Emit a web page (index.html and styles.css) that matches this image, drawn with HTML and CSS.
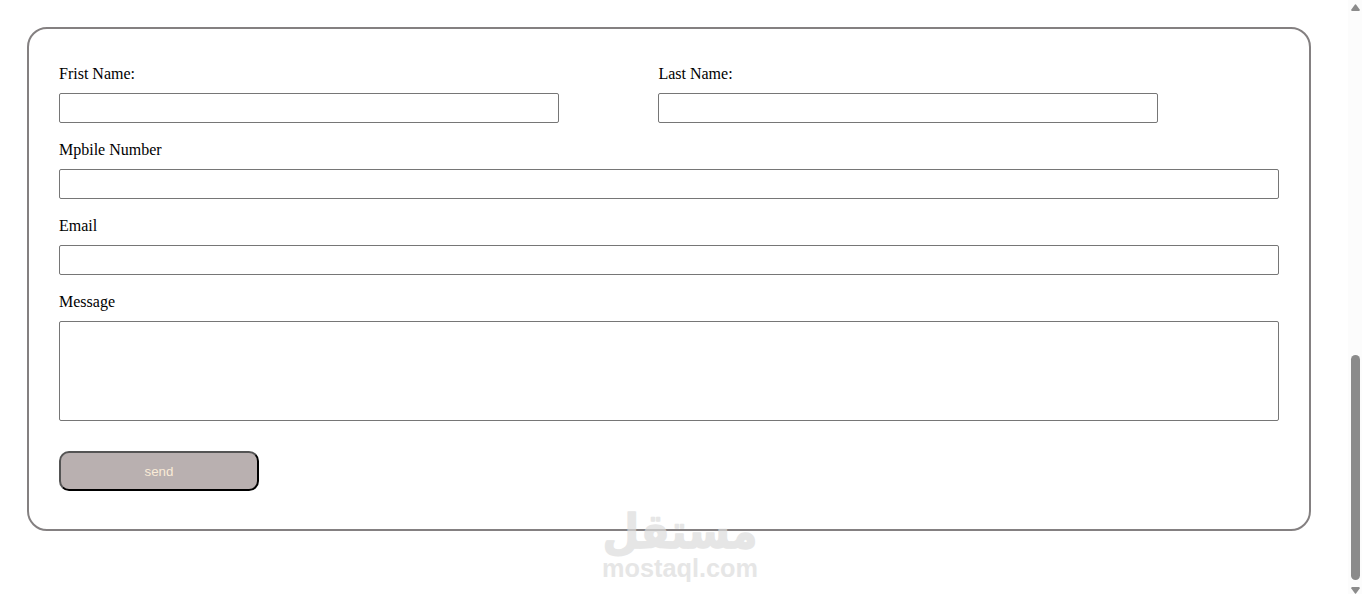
FILE: index.html
```html
<!DOCTYPE html>
<html lang="en">

<head>
    <meta charset="utf-8">
    <meta name="viewport" content="width=device-width, initial-scale=1">
    <title>Contact</title>
    <link rel="stylesheet" href="styles.css">
</head>

<body>
    <main>
        <form class="contact">
            <div class="names">
                <div class="field">
                    <label for="fname">Frist Name:</label>
                    <input type="text" id="fname">
                </div>
                <div class="field">
                    <label for="lname">Last Name:</label>
                    <input type="text" id="lname">
                </div>
            </div>
            <div class="field">
                <label for="mobile">Mpbile Number</label>
                <input type="text" id="mobile">
            </div>
            <div class="field">
                <label for="email">Email</label>
                <input type="email" id="email">
            </div>
            <div class="field">
                <label for="message">Message</label>
                <textarea id="message"></textarea>
            </div>
            <button type="button" class="send">send</button>
        </form>
    </main>

    <div class="scrollbar">
        <svg width="9" height="7" viewBox="0 0 9 7"><path d="M4 .5Q4.500 0 5 .5L8.700 5.500Q9 7 8 7H1Q0 7 .3 5.500Z"/></svg>
        <div class="thumb"></div>
        <svg width="9" height="7" viewBox="0 0 9 7"><path d="M4 6.500Q4.500 7 5 6.500L8.700 1.500Q9 0 8 0H1Q0 0 .3 1.500Z"/></svg>
    </div>

    <svg class="watermark" width="180" height="100" viewBox="-10 -14 180 100">
        <text class="arabic" x="80" y="40" text-anchor="middle" textLength="155" lengthAdjust="spacingAndGlyphs">مستقل</text>
        <text class="latin" x="2" y="69" textLength="156" lengthAdjust="spacingAndGlyphs">mostaql.com</text>
    </svg>
</body>

</html>
```
FILE: styles.css
```css
body {
    margin: 0;
    display: flex;
    height: 594px;
    overflow: hidden;
    position: relative;
    background-color: #fff;
    font-family: "Liberation Serif", "Times New Roman", serif;
    font-size: 16px;
}

main {
    flex: 1;
    padding: 27px 37px 0 27px;
}

.contact {
    box-sizing: border-box;
    height: 504px;
    padding: 36px 30px 30px;
    border: 2px solid #848081;
    border-radius: 20px;
}

.names {
    display: flex;
    gap: 99.4px;
}

.names .field {
    width: 500px;
}

.field {
    margin-bottom: 18px;
}

label {
    display: block;
    line-height: 18px;
    margin-bottom: 10px;
}

input,
textarea {
    display: block;
    box-sizing: border-box;
    width: 100%;
    height: 30px;
    border: 1px solid #767676;
    border-radius: 2px;
    background-color: #fff;
}

textarea {
    height: 100px;
    resize: none;
}

.send {
    display: block;
    width: 200px;
    height: 40px;
    margin-top: 30px;
    padding: 0;
    border: 2px outset #000;
    border-radius: 10px;
    background-color: #b9b0b0;
    color: antiquewhite;
    font-family: "Liberation Sans", Arial, sans-serif;
    font-size: 13.333px;
}

.scrollbar {
    box-sizing: border-box;
    width: 14px;
    padding: 4px 2px 0 3px;
    background-color: #fcfcfc;
}

.scrollbar svg {
    display: block;
    fill: #8b8b8b;
}

.thumb {
    width: 9px;
    height: 225px;
    margin: 344px 0 7px;
    border-radius: 5px;
    background-color: #8b8b8b;
}

.watermark {
    position: absolute;
    left: 590px;
    top: 494px;
    fill: #dcdcdc;
    opacity: .7;
}

.arabic {
    font: bold 48px "DejaVu Sans", sans-serif;
    stroke: #dcdcdc;
    stroke-width: 1.4;
    stroke-linejoin: round;
}

.latin {
    font: bold 25px "Liberation Sans", Arial, sans-serif;
}
```
